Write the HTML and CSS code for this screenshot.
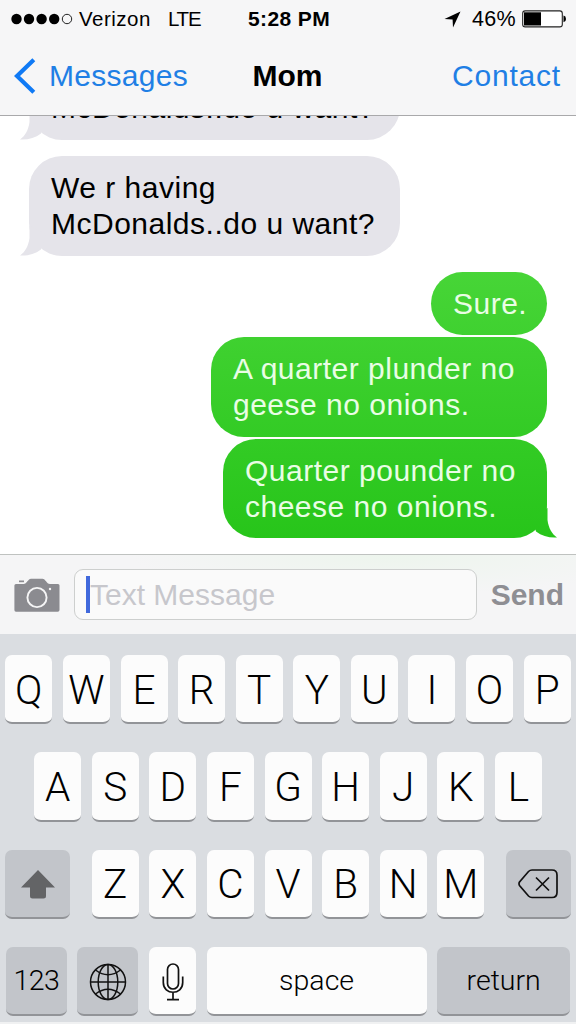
FILE: index.html
```
<!DOCTYPE html>
<html lang="en">

<head>
  <meta charset="utf-8">
  <meta name="viewport" content="width=device-width, initial-scale=1">
  <title>Mom</title>
  <link rel="stylesheet" href="styles.css">
</head>

<body>
  <div class="phone">
    <header class="header">
      <div class="status">
        <div class="status-left">
          <svg class="signal" width="62" height="12" viewBox="0 0 62 12">
            <circle cx="5.5" cy="6" r="5.2" />
            <circle cx="18" cy="6" r="5.2" />
            <circle cx="30.6" cy="6" r="5.2" />
            <circle cx="43.2" cy="6" r="5.2" />
            <circle cx="56" cy="6" r="4.7" fill="none" stroke="#222" />
          </svg>
          <span class="carrier">Verizon</span>
          <span class="network">LTE</span>
        </div>
        <span class="time">5:28 PM</span>
        <div class="status-right">
          <svg width="17" height="17" viewBox="0 0 17 17">
            <path d="M16.5 .5 L9 16.5 L8.6 8.4 L.5 8 Z" />
          </svg>
          <span class="percent">46%</span>
          <svg width="45" height="18" viewBox="0 0 45 18">
            <rect x=".7" y=".9" width="39.6" height="16" rx="2.5" fill="#fff" stroke="#222" stroke-width="1.1" />
            <rect x="2" y="2.3" width="17" height="13.2" />
            <path d="M41.5 5.5 Q44 6 44 8.9 T41.5 12.3 Z" />
          </svg>
        </div>
      </div>

      <nav class="nav">
        <a class="back">
          <svg width="22" height="36" viewBox="0 0 22 36">
            <path d="M19.8 1.8 L3 18 L19.8 34.2" fill="none" stroke="#107af5" stroke-width="4.2" />
          </svg>
          <span>Messages</span>
        </a>
        <h1>Mom</h1>
        <a class="contact">Contact</a>
      </nav>
    </header>

    <main class="messages">
      <div class="bubble received">We r having<br>McDonalds..do u want?
        <svg class="tail" width="26" height="30" viewBox="0 0 26 30">
          <path d="M9.5 0 V12 C8.500 20 5 26 0 29.500 C8 30 15 28 21 23.500 L26 8 Z" />
        </svg>
      </div>
      <div class="bubble received">We r having<br>McDonalds..do u want?
        <svg class="tail" width="26" height="30" viewBox="0 0 26 30">
          <path d="M9.5 0 V12 C8.500 20 5 26 0 29.500 C8 30 15 28 21 23.500 L26 8 Z" />
        </svg>
      </div>
      <div class="bubble sent short">Sure.</div>
      <div class="bubble sent long">A quarter plunder no<br>geese no onions.</div>
      <div class="bubble sent last">Quarter pounder no<br>cheese no onions.
        <svg class="tail" width="26" height="30" viewBox="0 0 26 30">
          <defs>
            <linearGradient id="green" x2="0" y2="1">
              <stop stop-color="#2bc71e" />
              <stop offset="1" stop-color="#27c51a" />
            </linearGradient>
          </defs>
          <path d="M16.5 0 V12 C17.500 20 21 26 26 29.500 C18 30 11 28 5 23.500 L0 8 Z" fill="url(#green)" />
        </svg>
      </div>
    </main>

    <div class="compose">
      <svg class="camera" width="46" height="34" viewBox="0 0 46 34">
        <path d="M5 2.5 H10 V4.2 H5 Z" />
        <path d="M2 6 H9.5 C13 6 14 .8 17 .8 H28.5 C31.5 .8 32.5 6 36 6 H44 Q45.5 6 45.5 7.5 V32 Q45.5 33.8 43.7 33.8 H2 Q.4 33.8 .4 32 V7.5 Q.4 6 2 6 Z" />
        <circle cx="23" cy="19.5" r="9.6" fill="none" stroke="#f5f5f6" stroke-width="1.9" />
        <circle cx="36" cy="11" r="1.2" fill="#f5f5f6" />
      </svg>
      <div class="field"><span class="caret"></span>Text Message</div>
      <span class="send">Send</span>
    </div>

    <div class="keyboard">
      <div class="row">
        <span class="key">Q</span><span class="key">W</span><span class="key">E</span><span class="key">R</span><span class="key">T</span><span class="key">Y</span><span class="key">U</span><span class="key">I</span><span class="key">O</span><span class="key">P</span>
      </div>
      <div class="row">
        <span class="key">A</span><span class="key">S</span><span class="key">D</span><span class="key">F</span><span class="key">G</span><span class="key">H</span><span class="key">J</span><span class="key">K</span><span class="key">L</span>
      </div>
      <div class="row">
        <span class="key dark shift">
          <svg width="34" height="29" viewBox="0 0 34 29">
            <path d="M17 0 L34 17.5 H25 V26 Q25 28.5 22.5 28.5 H11.5 Q9 28.5 9 26 V17.5 H0 Z" fill="#636466" />
          </svg>
        </span>
        <span class="key">Z</span><span class="key">X</span><span class="key">C</span><span class="key">V</span><span class="key">B</span><span class="key">N</span><span class="key">M</span>
        <span class="key dark delete">
          <svg width="40" height="30" viewBox="0 0 40 30" fill="none" stroke="#111" stroke-width="1.7">
            <path d="M14 1 H34 Q39 1 39 6 V23.5 Q39 28.5 34 28.5 H14 Q12 28.5 10.5 27 L1.5 16.500 Q.5 14.800 1.500 13 L10.5 2.5 Q12 1 14 1 Z" />
            <path d="M18 8.5 L31 21.5 M31 8.5 L18 21.5" />
          </svg>
        </span>
      </div>
      <div class="row">
        <span class="key dark word numbers">123</span>
        <span class="key dark globe">
          <svg width="38" height="38" viewBox="0 0 38 38" fill="none" stroke="#111" stroke-width="1.5">
            <circle cx="19" cy="19" r="17.5" />
            <ellipse cx="19" cy="19" rx="9.8" ry="17.5" />
            <path d="M19 1.5 V36.5 M1.5 19 H36.5" />
            <path d="M6.5 7 Q19 16.5 31.5 7 M6.5 31 Q19 21.5 31.5 31" />
          </svg>
        </span>
        <span class="key mic">
          <svg width="22" height="38" viewBox="0 0 22 38" fill="none" stroke="#111" stroke-width="1.7">
            <rect x="5.5" y="1" width="11" height="25" rx="5.5" />
            <path d="M1.3 13.5 V19.5 C1.3 32.5 20.7 32.5 20.7 19.5 V13.5 M11 29.5 V36.5 M5 36.7 H17" />
          </svg>
        </span>
        <span class="key word space">space</span>
        <span class="key dark word return">return</span>
      </div>
    </div>
  </div>
</body>

</html>
```

FILE: styles.css
```
* {
  box-sizing: border-box;
}

body {
  margin: 0;
  font-family: "Liberation Sans", Arial, sans-serif;
  font-size: 30px;
  color: #000;
  background: #fff;
}

svg {
  display: block;
  flex: none;
}

.phone {
  display: flex;
  flex-direction: column;
  width: 576px;
  height: 1024px;
  overflow: hidden;
}

/* status bar + navigation */
.header {
  flex: none;
  height: 116px;
  background: #f6f6f7;
  border-bottom: 1px solid #a9a9ab;
}

.status,
.nav {
  display: grid;
  grid-template-columns: 1fr auto 1fr;
  align-items: center;
}

.status {
  height: 38px;
  padding: 0 9px 0 11px;
  font-size: 20.5px;
}

.status-left,
.status-right {
  display: flex;
  align-items: center;
}

.status-right {
  justify-content: flex-end;
}

.carrier {
  margin-left: 6px;
  letter-spacing: 0.5px;
}

.network {
  margin-left: 17px;
  letter-spacing: -1.2px;
}

.time {
  font-size: 21px;
  font-weight: bold;
  letter-spacing: 0.4px;
}

.percent {
  margin: 0 6px 0 11px;
  font-size: 21.5px;
  letter-spacing: 0.3px;
}

.nav {
  height: 76px;
  padding: 0 15px 0 14px;
}

.nav h1 {
  margin: 0;
  font-size: 30px;
}

.back {
  display: flex;
  align-items: center;
  gap: 13px;
  color: #1f7fe5;
  letter-spacing: 0.3px;
}

.contact {
  justify-self: end;
  color: #1f7fe5;
  letter-spacing: 0.8px;
}

/* conversation */
.messages {
  flex: 1;
  min-height: 0;
  display: flex;
  flex-direction: column;
  justify-content: flex-end;
  padding: 0 29px 16px;
  overflow: hidden;
}

.bubble {
  position: relative;
  flex: none;
  padding: 14px 22px 13.5px;
  border-radius: 33px;
  line-height: 36px;
  letter-spacing: 0.5px;
  white-space: nowrap;
}

.received {
  align-self: flex-start;
  width: 371px;
  margin-bottom: 16.5px;
  background: #e5e4ea;
}

.sent {
  align-self: flex-end;
  margin-bottom: 2px;
  color: #e9fde5;
  background: linear-gradient(#47d537 272px, #27c51a 538px) fixed;
}

.short {
  width: 116px;
  height: 63px;
}

.long {
  width: 336px;
}

.last {
  width: 324px;
  margin-bottom: 0;
}

.tail {
  position: absolute;
  bottom: 0;
}

.received .tail {
  left: -9.5px;
  fill: #e5e4ea;
}

.sent .tail {
  right: -9.5px;
}

/* input bar */
.compose {
  flex: none;
  display: flex;
  align-items: center;
  height: 80px;
  padding: 0 12px 0 14px;
  background: radial-gradient(260px 40px at 390px 0, #edf5ed, #f5f5f6);
  border-top: 1px solid #bfc2c0;
}

.camera {
  fill: #8b8b90;
}

.field {
  display: flex;
  align-items: center;
  width: 403px;
  height: 51px;
  margin: 0 14px;
  padding-left: 11px;
  color: #c7c7cc;
  background: #fafafa;
  border: 1px solid #cdcfce;
  border-radius: 9px;
}

.caret {
  width: 4px;
  height: 37px;
  background: #4169dc;
}

.send {
  font-weight: bold;
  color: #8e8e93;
}

/* keyboard */
.keyboard {
  flex: none;
  display: flex;
  flex-direction: column;
  gap: 28px;
  height: 390px;
  padding: 21px 5px 0;
  background: #dadde1;
  border-bottom: 2px solid #f0f1f2;
}

.row {
  display: flex;
  justify-content: center;
  gap: 10.6px;
}

.key {
  display: flex;
  align-items: center;
  justify-content: center;
  flex: none;
  width: 47px;
  height: 69.3px;
  padding-top: 2px;
  font-family: Roboto, "Liberation Sans", sans-serif;
  font-size: 40.5px;
  font-weight: 300;
  background: #fcfcfc;
  border-bottom: 2px solid #929498;
  border-radius: 7px;
}

.dark {
  background: #c2c5ca;
}

.word {
  padding-top: 0;
  font-size: 28.5px;
}

.shift {
  width: 65px;
  margin-right: 11px;
}

.delete {
  width: 65px;
  margin-left: 11px;
}

.numbers,
.globe {
  width: 61px;
}

.numbers {
  letter-spacing: -0.6px;
}

.space {
  width: 220px;
}

.return {
  width: 133px;
}
```
